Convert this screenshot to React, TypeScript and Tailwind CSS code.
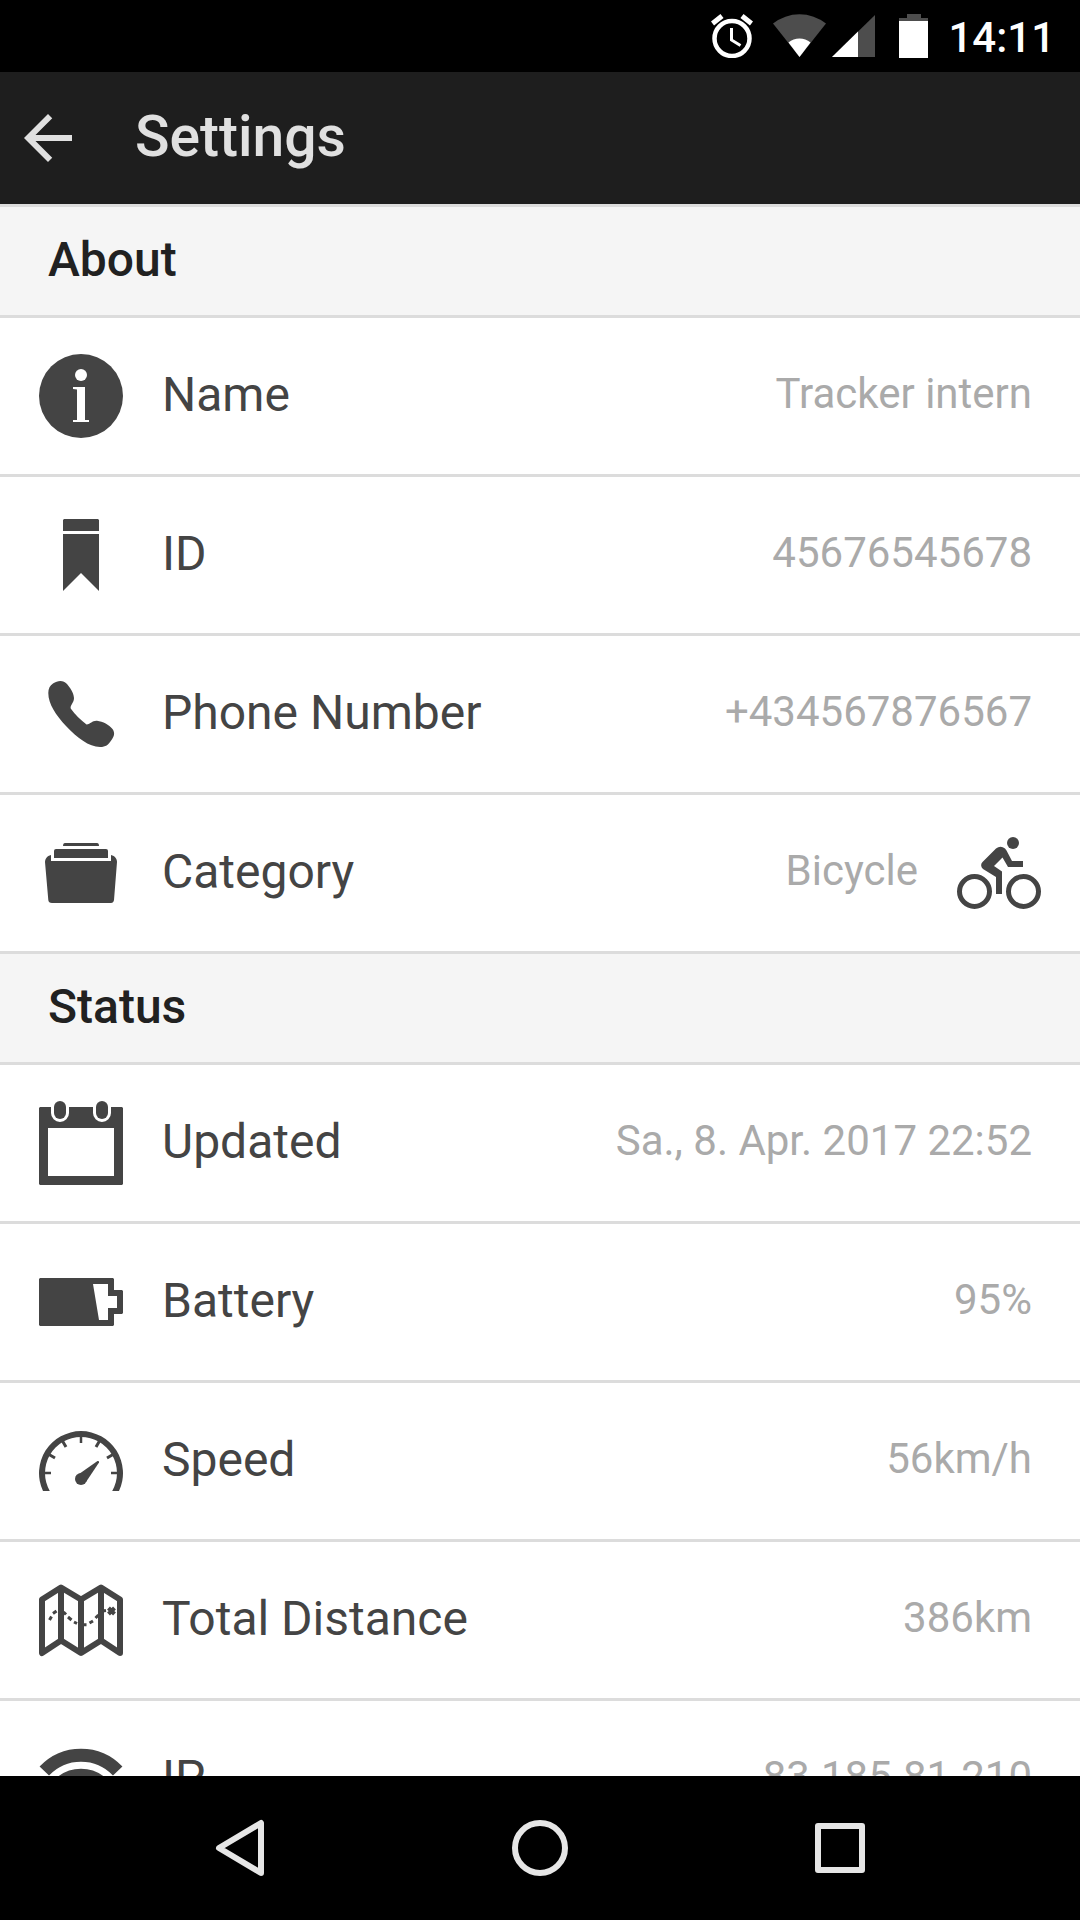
import type { ReactNode } from 'react';

type Row = {
  label: string;
  value: string;
  icon: ReactNode;
  trailing?: ReactNode;
};

function Glyph({ children }: { children: ReactNode }) {
  return (
    <svg viewBox="0 0 84 84" className="size-[84px] shrink-0" fill="currentColor" aria-hidden="true">
      {children}
    </svg>
  );
}

const InfoIcon = () => (
  <Glyph>
    <circle cx="42" cy="42" r="42" />
    <g fill="#fff">
      <circle cx="42" cy="21" r="6" />
      <path d="M34 33H46V66H50V68H34V66H38V35.5L34 35Z" />
    </g>
  </Glyph>
);

const BookmarkIcon = () => (
  <Glyph>
    <path d="M25 6H59L60 7V18H24V7Z" />
    <path d="M24 21H60V78L42 60L24 78Z" />
  </Glyph>
);

const PhoneIcon = () => (
  <Glyph>
    <path d="M14 11.5C19 8 24.5 8 28 12C31 16 34.5 20 35 26C35 31 31 33 31.700 36.500C36 43 42 48 47.500 52.500C52 52 53 48.500 58 48.800C64 49.500 70 53 73.500 57C76 60.500 75.500 64 72.500 68C69 73 67 75 61 75C50 75 38 65.500 27 54C17 43 9.300 32 9.300 21C9.300 16.500 11 13.500 14 11.500Z" />
  </Glyph>
);

const FolderIcon = () => (
  <Glyph>
    <path d="M26 12H58Q60 12 60 15H24Q24 12 26 12Z" />
    <path d="M17 18H67Q69 18 69 20V27H15V20Q15 18 17 18Z" />
    <path d="M12 24V30H72V24C76 25 78 28 78 31L75 69Q74.500 72 72 72H13Q9.500 72 9.300 69L6 31C6 28 8 25 12 24Z" />
  </Glyph>
);

const CyclistIcon = () => (
  <Glyph>
    <g fill="none" stroke="currentColor" strokeWidth="5">
      <circle cx="17.500" cy="60.500" r="15" />
      <circle cx="66.500" cy="60.500" r="15" />
    </g>
    <circle cx="56" cy="12" r="6" />
    <path d="M39 17.500Q43.500 14 48 17.500L49.500 19.500L55 30H66V36H51L45.500 26.500L37 35L45 40.500V63H39V46L26 38Q22.500 34.500 25.500 31Z" />
  </Glyph>
);

const CalendarIcon = () => (
  <Glyph>
    <path
      fillRule="evenodd"
      d="M1 6H12V12A9 9 0 0 0 30 12V6H54V12A9 9 0 0 0 72 12V6H83L84 7V83L83 84H1L0 83V7ZM9 27V75H75V27Z"
    />
    <rect x="15" y="0" width="12" height="18" rx="6" />
    <rect x="57" y="0" width="12" height="18" rx="6" />
  </Glyph>
);

const BatteryIcon = () => (
  <Glyph>
    <path
      fillRule="evenodd"
      d="M1 18H74L75 19V30H83L84 31V53L83 54H75V65L74 66H1L0 65V19ZM54 24L60 60H69V48H78V36H69V24Z"
    />
  </Glyph>
);

const SpeedIcon = () => (
  <Glyph>
    <path d="M4 72A42 42 0 1 1 80 72H73.200A36 36 0 1 0 10.800 72Z" />
    <g stroke="currentColor" strokeWidth="2.500">
      <path d="M5 54H12M79 54H72M42 17V24" />
      <path strokeWidth="3" d="M10 35.500L16 39M74 35.500L68 39M23.500 22L27 28M60.500 22L57 28" />
    </g>
    <path d="M36.500 57.500L58.500 42Q60.500 41.500 60 43.500L47 63Z" />
    <circle cx="42" cy="60" r="6" />
  </Glyph>
);

const MapIcon = () => (
  <Glyph>
    <g fill="none" stroke="currentColor" strokeWidth="6" strokeLinejoin="round">
      <path d="M3 21.500L22 9.500L42 21.500L62 9.500L81 21.500V75L62 62.500L42 75L22 62.500L3 75Z" />
      <path d="M22 9V63M42 21V75M62 9V63" />
    </g>
    <g fill="none" stroke="currentColor" strokeWidth="3">
      <path d="M10.500 42L12.500 38.500M14 35.500L17.500 33M24.500 34L27 36.500M29 39L32.500 42M35 44L38 45.500M44 46.700H47.500M50.500 45L54 43M56.500 40L59.500 37M63.500 33L67 32.500" />
      <path strokeWidth="4" d="M69.500 30L75.500 36M75.500 30L69.500 36" />
    </g>
  </Glyph>
);

const NetworkIcon = () => (
  <Glyph>
    <g fill="none" stroke="currentColor" strokeWidth="13">
      <path d="M5.300 34A50.500 50.500 0 0 1 78.700 34" />
      <path d="M20 47.400A31 31 0 0 1 64 47.400" />
    </g>
    <circle cx="42" cy="69" r="10" />
  </Glyph>
);

const sections: { title: string; rows: Row[] }[] = [
  {
    title: 'About',
    rows: [
      { label: 'Name', value: 'Tracker intern', icon: <InfoIcon /> },
      { label: 'ID', value: '45676545678', icon: <BookmarkIcon /> },
      { label: 'Phone Number', value: '+434567876567', icon: <PhoneIcon /> },
      { label: 'Category', value: 'Bicycle', icon: <FolderIcon />, trailing: <CyclistIcon /> },
    ],
  },
  {
    title: 'Status',
    rows: [
      { label: 'Updated', value: 'Sa., 8. Apr. 2017 22:52', icon: <CalendarIcon /> },
      { label: 'Battery', value: '95%', icon: <BatteryIcon /> },
      { label: 'Speed', value: '56km/h', icon: <SpeedIcon /> },
      { label: 'Total Distance', value: '386km', icon: <MapIcon /> },
      { label: 'IP', value: '83.185.81.210', icon: <NetworkIcon /> },
    ],
  },
];

function StatusBar() {
  return (
    <div className="flex h-[72px] shrink-0 items-center justify-end bg-black pr-[25px] text-white">
      <svg viewBox="0 0 42 44" className="h-[44px] w-[42px]" fill="none" stroke="currentColor" aria-label="Alarm set">
        <circle cx="21" cy="24.500" r="17.500" strokeWidth="4.500" />
        <path strokeWidth="5" d="M1.500 9.500L11 2M40.500 9.500L31 2" />
        <path strokeWidth="3" d="M20.500 14V26L29.500 31.500" />
      </svg>
      <svg viewBox="0 0 53 44" className="ml-5 h-[44px] w-[53px]" fill="currentColor" aria-label="Wi-Fi">
        <path fill="#4d4d4d" d="M26.500 43L0 9.500A43 43 0 0 1 53 9.500Z" />
        <path d="M26.500 43L15.500 28.500A17.500 17.500 0 0 1 37.500 28.500Z" />
      </svg>
      <svg viewBox="0 0 43 44" className="ml-1.5 h-[44px] w-[43px]" fill="currentColor" aria-label="Mobile signal">
        <path fill="#4d4d4d" d="M0 43H43V1Z" />
        <path d="M0 43H26V17.500Z" />
      </svg>
      <svg viewBox="0 0 29 44" className="ml-6 h-[44px] w-[29px]" fill="currentColor" aria-label="Battery">
        <path fill="#4d4d4d" d="M8 0H22V4H29V8H0V4H8Z" />
        <path d="M0 7H29V44H0Z" />
      </svg>
      <time className="ml-5 pt-1 text-[42px] leading-[48px] font-medium">14:11</time>
    </div>
  );
}

function SettingRow({ row }: { row: Row }) {
  return (
    <div
      className={`flex h-[159px] items-center border-b-[3px] border-[#dcdcdc] pl-[39px] ${
        row.trailing ? 'pr-[39px]' : 'pr-[48px]'
      }`}
    >
      {row.icon}
      <dt className="ml-[39px] pb-[3px] text-[48px] leading-[56px]">{row.label}</dt>
      <dd className="ml-auto flex items-center gap-[39px]">
        <span className="pb-[5px] text-[42px] leading-[50px] text-[#aaaaaa]">{row.value}</span>
        {row.trailing}
      </dd>
    </div>
  );
}

export default function App() {
  return (
    <div className="flex h-screen flex-col overflow-hidden bg-white font-[Roboto,sans-serif] text-[#444444]">
      <StatusBar />
      <header className="flex h-[132px] shrink-0 items-center bg-[#1e1e1e] pl-3 text-[#e0e0e0]">
        <button type="button" aria-label="Back" className="size-[72px]">
          <svg viewBox="0 0 24 24" className="size-full" fill="currentColor" aria-hidden="true">
            <path d="M20 11H7.830l5.590-5.590L12 4l-8 8 8 8 1.410-1.410L7.830 13H20v-2z" />
          </svg>
        </button>
        <h1 className="ml-[51px] pb-0.5 text-[57px] leading-[66px] font-medium">Settings</h1>
      </header>
      <main className="min-h-0 flex-1 overflow-y-auto border-t-[3px] border-[#dcdcdc] [scrollbar-width:none]">
        {sections.map((section) => (
          <section key={section.title}>
            <h2 className="flex h-[111px] items-center border-b-[3px] border-[#dcdcdc] bg-[#f5f5f5] px-[48px] pb-[3px] text-[48px] leading-[56px] font-medium text-[#212121]">
              {section.title}
            </h2>
            <dl>
              {section.rows.map((row) => (
                <SettingRow key={row.label} row={row} />
              ))}
            </dl>
          </section>
        ))}
      </main>
      <nav aria-label="System" className="grid h-[144px] shrink-0 grid-cols-3 bg-black px-[90px] text-[#e6e6e6]">
        <button type="button" aria-label="Back" className="grid place-items-center">
          <svg viewBox="0 0 60 60" className="size-[60px]" fill="none" stroke="currentColor" strokeWidth="6" aria-hidden="true">
            <path strokeLinejoin="round" d="M51 5V55L9 30Z" />
          </svg>
        </button>
        <button type="button" aria-label="Home" className="grid place-items-center">
          <svg viewBox="0 0 60 60" className="size-[60px]" fill="none" stroke="currentColor" strokeWidth="6" aria-hidden="true">
            <circle cx="30" cy="30" r="25" />
          </svg>
        </button>
        <button type="button" aria-label="Recent apps" className="grid place-items-center">
          <svg viewBox="0 0 60 60" className="size-[60px]" fill="none" stroke="currentColor" strokeWidth="6" strokeLinejoin="round" aria-hidden="true">
            <rect x="8" y="8" width="44" height="44" />
          </svg>
        </button>
      </nav>
    </div>
  );
}
